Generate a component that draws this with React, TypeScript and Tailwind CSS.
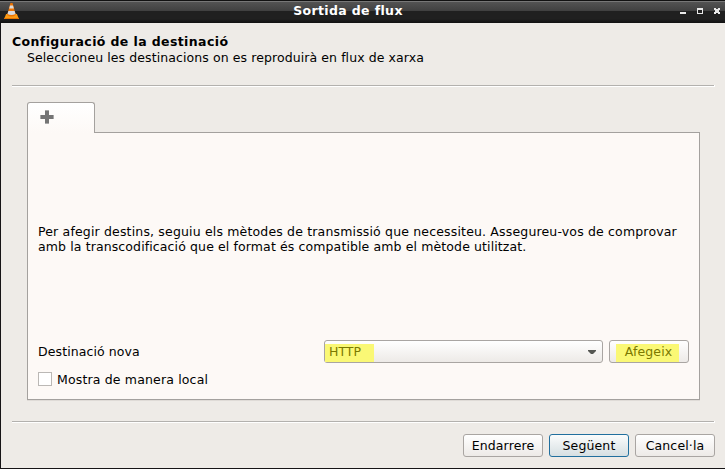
import type { ReactNode } from "react";

function Cone() {
  return (
    <svg width="15" height="16" viewBox="0 0 14 16" preserveAspectRatio="none" className="block">
      <path d="M2 11h10l2 5H0z" fill="#fb9c14" />
      <path d="M0 15h14v1H0z" fill="#e87400" />
      <path d="M6 0h2l3 12Q7 15 3 12z" fill="#ee7300" />
      <path d="M5.6 2.5h2.8l.8 3H4.8z" fill="#dcdcdc" />
      <path d="M4.1 8h5.8l.9 3Q7 13 3.2 11z" fill="#d8dadc" />
    </svg>
  );
}

function Rule() {
  return (
    <div className="h-[2px] w-[703px] bg-white">
      <div className="h-px w-[702px] bg-[#b3b1ae]" />
    </div>
  );
}

function Button({ children, primary = false }: { children: ReactNode; primary?: boolean }) {
  return (
    <button
      className={
        primary
          ? "h-[23px] w-20 rounded-[3px] border border-[#216f9e] bg-linear-to-b from-[#fbfcfc] to-[#d6dfe2] leading-[21px] tracking-[0.14px]"
          : "h-[23px] w-20 rounded-[3px] border border-[#a9a5a2] bg-linear-to-b from-white to-[#edeae7] leading-[21px] tracking-[0.14px]"
      }
    >
      {children}
    </button>
  );
}

export default function App() {
  return (
    <div className="flex h-[469px] w-[725px] flex-col overflow-hidden bg-[#eeebe7] text-[12.5px] leading-[15px] text-black [font-family:'DejaVu_Sans',sans-serif]">
      <header className="flex h-[23px] shrink-0 border-t border-[#111] bg-[linear-gradient(to_bottom,#777_0,#777_1px,#535353_1px,#404040_10px,#202020_10px,#202020_18px,#111_22px)]">
        <div className="w-[34px] pt-[2px] pl-1"><Cone /></div>
        <h1 className="flex-1 pt-[2px] pr-[18px] text-center text-[12.5px] leading-[15px] font-bold tracking-[0.36px] text-white">Sortida de flux</h1>
        <svg width="45" height="22" shapeRendering="crispEdges" fill="#e8e8e8">
          <path d="M0 11h6v2H0zM17 7h6v6h-6zM34 7h2v1h2V7h2v2h-1v2h1v2h-2v-1h-2v1h-2v-2h1V9h-1z" />
          <path d="M18 9h4v3h-4z" fill="#222" />
        </svg>
      </header>
      <main className="flex min-h-0 flex-1 flex-col border-b border-l border-[#161416] pl-[11px]">
        <h2 className="mt-[11px] text-[12.5px] leading-4 font-bold tracking-[0.39px]">Configuració de la destinació</h2>
        <p className="pl-[15px] leading-4 tracking-[0.09px]">Seleccioneu les destinacions on es reproduirà en flux de xarxa</p>
        <div className="mt-[19px]"><Rule /></div>
        <section className="mt-[15px] ml-[15px] w-[673px]">
          <div className="relative z-10 -mb-px flex h-[31px] w-[68px] rounded-t-[3px] border border-b-0 border-[#a4a19e] bg-linear-to-b from-white to-[#fdf9f6] pt-[7px] pl-3">
            <svg width="14" height="14" shapeRendering="crispEdges">
              <path d="M5 0h4v14H5zM0 5h14v4H0z" fill="#a8a8a8" />
              <path d="M5 1h4v12H5zM1 5h12v4H1z" fill="#757575" />
            </svg>
          </div>
          <div className="flex h-[268px] flex-col border border-[#a4a19e] bg-[#fdf9f6] px-[10px] shadow-[0_1px_0_#dfdbd7]">
            <p className="mt-[91px] whitespace-nowrap">
              <span className="tracking-[0.165px]">
                Per afegir destins, seguiu els mètodes de transmissió que necessiteu. Assegureu-vos de comprovar
              </span>
              <br />
              <span className="tracking-[0.115px]">
                amb la transcodificació que el format és compatible amb el mètode utilitzat.
              </span>
            </p>
            <div className="mt-[86px] flex h-[23px] items-center">
              <span className="w-[286px] tracking-[0.1px]">Destinació nova</span>
              <div className="flex h-[23px] w-[279px] items-center justify-between rounded-[3px] border border-[#a9a5a2] bg-linear-to-b from-white to-[#edeae7] pr-[6px]">
                <span className="mt-[3px] h-[18px] w-[49px] bg-[#faf875] pl-1 leading-[16px] text-[#7b7900]">HTTP</span>
                <svg width="8" height="5" className="mt-[2px]"><path d="M0 0h8v1L5 4H3L0 1z" fill="#555753" /></svg>
              </div>
              <div className="ml-[6px] flex">
                <Button>
                  <span className="mt-[3px] ml-[6px] block h-[18px] w-[63px] bg-[#faf875] pl-[2px] leading-[16px] text-[#7b7900]">Afegeix</span>
                </Button>
              </div>
            </div>
            <label className="mt-2 flex h-4 items-center gap-[5px]">
              <input type="checkbox" className="h-[14px] w-[14px] appearance-none border border-[#bbb8b5] bg-white" />
              <span className="tracking-[0.16px]">Mostra de manera local</span>
            </label>
          </div>
        </section>
        <div className="mt-[21px]"><Rule /></div>
        <footer className="mt-[11px] mr-[10px] flex justify-end gap-[6px]">
          <Button>Endarrere</Button>
          <Button primary>Següent</Button>
          <Button>Cancel·la</Button>
        </footer>
      </main>
    </div>
  );
}
